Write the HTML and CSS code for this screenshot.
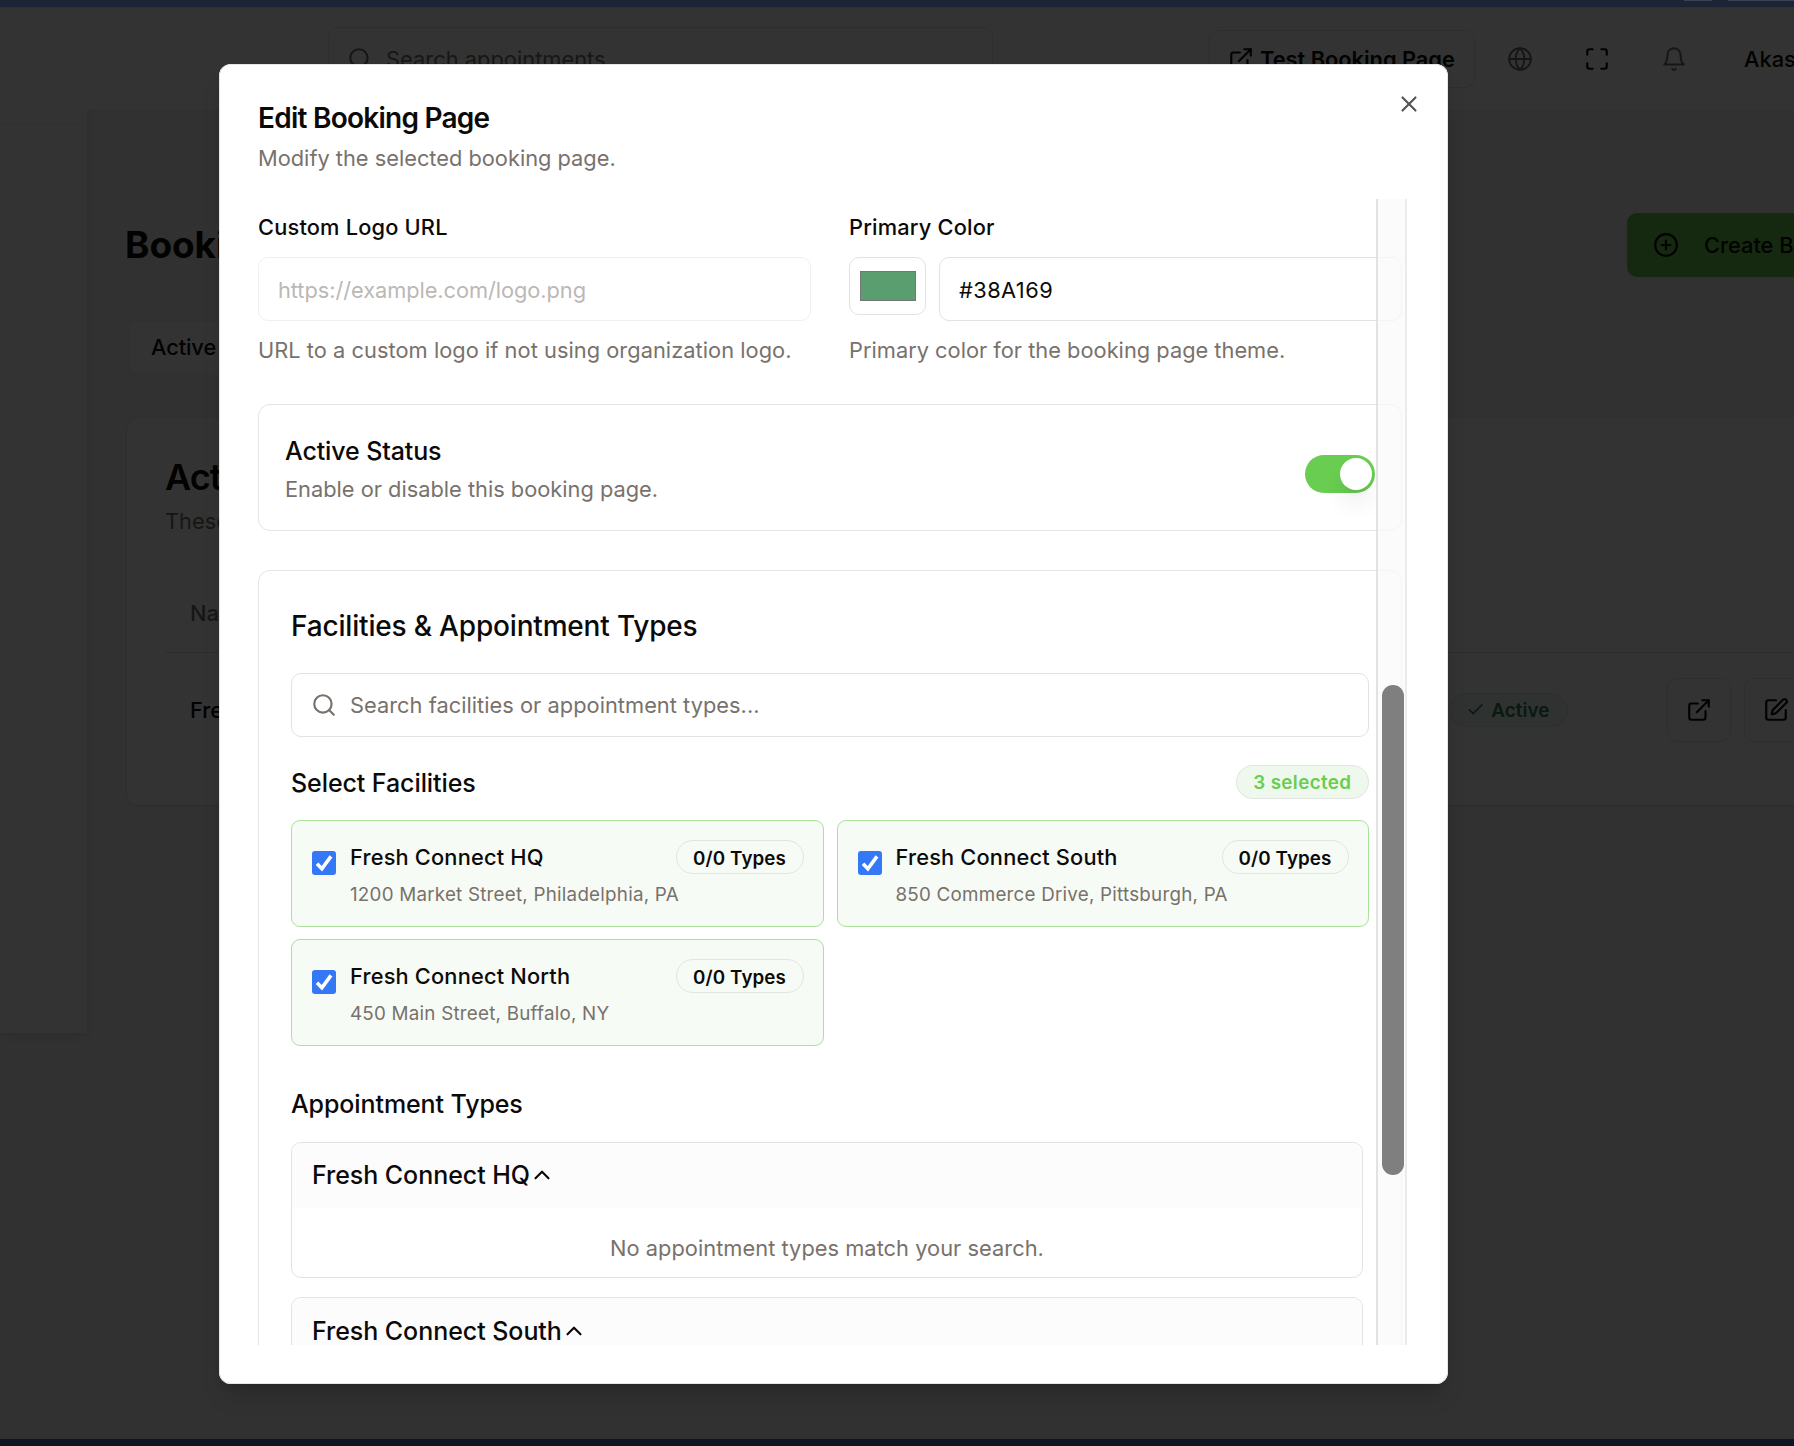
FILE: index.html
```html
<!DOCTYPE html>
<html lang="en">
<head>
<meta charset="utf-8">
<title>Booking Pages</title>
<link rel="stylesheet" href="styles.css">
</head>
<body>
<svg class="sprite" aria-hidden="true">
  <symbol id="i-search" viewBox="0 0 24 24"><circle cx="11" cy="11" r="8"/><path d="m21 21-4.3-4.3"/></symbol>
  <symbol id="i-link" viewBox="0 0 24 24"><path d="M15 3h6v6"/><path d="M10 14 21 3"/><path d="M18 13v6a2 2 0 0 1-2 2H5a2 2 0 0 1-2-2V8a2 2 0 0 1 2-2h6"/></symbol>
  <symbol id="i-globe" viewBox="0 0 24 24"><circle cx="12" cy="12" r="10"/><path d="M12 2a14.5 14.5 0 0 0 0 20 14.5 14.5 0 0 0 0-20"/><path d="M2 12h20"/></symbol>
  <symbol id="i-max" viewBox="0 0 24 24"><path d="M8 3H5a2 2 0 0 0-2 2v3"/><path d="M21 8V5a2 2 0 0 0-2-2h-3"/><path d="M3 16v3a2 2 0 0 0 2 2h3"/><path d="M16 21h3a2 2 0 0 0 2-2v-3"/></symbol>
  <symbol id="i-bell" viewBox="0 0 24 24"><path d="M6 8a6 6 0 0 1 12 0c0 7 3 9 3 9H3s3-2 3-9"/><path d="M10.3 21a1.94 1.94 0 0 0 3.4 0"/></symbol>
  <symbol id="i-plus" viewBox="0 0 24 24"><circle cx="12" cy="12" r="10"/><path d="M8 12h8"/><path d="M12 8v8"/></symbol>
  <symbol id="i-check" viewBox="0 0 24 24"><path d="M20 6 9 17l-5-5"/></symbol>
  <symbol id="i-edit" viewBox="0 0 24 24"><path d="M12 3H5a2 2 0 0 0-2 2v14a2 2 0 0 0 2 2h14a2 2 0 0 0 2-2v-7"/><path d="M18.375 2.625a1 1 0 0 1 3 3l-9.013 9.014a2 2 0 0 1-.853.505l-2.873.84a.5.5 0 0 1-.62-.62l.84-2.873a2 2 0 0 1 .506-.852z"/></symbol>
  <symbol id="i-x" viewBox="0 0 24 24"><path d="M18 6 6 18"/><path d="m6 6 12 12"/></symbol>
  <symbol id="i-up" viewBox="0 0 24 24"><path d="m18 15-6-6-6 6"/></symbol>
  <symbol id="i-tick" viewBox="0 0 24 24"><path d="M5 12.8 9.9 17.8 19 5.4"/></symbol>
</svg>

<div class="window-top"><span class="chip"></span><span class="chip wide"></span></div>

<div class="app">
  <aside class="sidebar"><div class="sidebar-head"></div></aside>
  <div class="content">
    <header class="topbar">
      <div class="top-search"><svg class="icon"><use href="#i-search"/></svg><span>Search appointments...</span></div>
      <button class="test-btn"><svg class="icon"><use href="#i-link"/></svg><span>Test Booking Page</span></button>
      <svg class="icon muted globe"><use href="#i-globe"/></svg>
      <svg class="icon max"><use href="#i-max"/></svg>
      <svg class="icon muted bell"><use href="#i-bell"/></svg>
      <span class="user">Akash</span>
    </header>
    <main class="main">
      <div class="title-row">
        <h1>Booking</h1>
        <button class="create-btn"><svg class="icon"><use href="#i-plus"/></svg><span>Create Booking Page</span></button>
      </div>
      <div class="tab">Active</div>
      <section class="card">
        <h2>Active</h2>
        <p class="card-sub">These</p>
        <div class="t-head">Name</div>
        <div class="t-row">
          <span class="t-name">Fresh</span>
          <span class="t-badge"><svg><use href="#i-check"/></svg>Active</span>
          <span class="t-btn first"><svg class="icon"><use href="#i-link"/></svg></span>
          <span class="t-btn"><svg class="icon"><use href="#i-edit"/></svg></span>
        </div>
      </section>
    </main>
  </div>

  <div class="overlay">
    <div class="modal" role="dialog">
      <svg class="icon close"><use href="#i-x"/></svg>
      <h3 class="m-title">Edit Booking Page</h3>
      <p class="m-desc">Modify the selected booking page.</p>

      <div class="scroll">
        <div class="form">
          <div class="cols">
            <div>
              <label class="label">Custom Logo URL</label>
              <input class="input disabled" placeholder="https://example.com/logo.png">
              <p class="help wide">URL to a custom logo if not using organization logo.</p>
            </div>
            <div>
              <label class="label">Primary Color</label>
              <div class="color-row">
                <div class="color-box"><div class="swatch"></div></div>
                <input class="input hex" value="#38A169">
              </div>
              <p class="help">Primary color for the booking page theme.</p>
            </div>
          </div>

          <div class="status">
            <div>
              <div class="status-title">Active Status</div>
              <div class="status-sub">Enable or disable this booking page.</div>
            </div>
            <div class="toggle"><div class="knob"></div></div>
          </div>

          <div class="facilities">
            <h4>Facilities &amp; Appointment Types</h4>
            <div class="f-search"><svg class="icon"><use href="#i-search"/></svg><span>Search facilities or appointment types...</span></div>
            <div class="select-row"><span class="sub-title">Select Facilities</span><span class="badge selected">3 selected</span></div>
            <div class="grid">
              <div class="fac">
                <span class="check"><svg><use href="#i-tick"/></svg></span>
                <div class="fac-text"><div class="fac-name">Fresh Connect HQ</div><div class="fac-addr">1200 Market Street, Philadelphia, PA</div></div>
                <span class="badge">0/0 Types</span>
              </div>
              <div class="fac">
                <span class="check"><svg><use href="#i-tick"/></svg></span>
                <div class="fac-text"><div class="fac-name">Fresh Connect South</div><div class="fac-addr">850 Commerce Drive, Pittsburgh, PA</div></div>
                <span class="badge">0/0 Types</span>
              </div>
              <div class="fac">
                <span class="check"><svg><use href="#i-tick"/></svg></span>
                <div class="fac-text"><div class="fac-name">Fresh Connect North</div><div class="fac-addr">450 Main Street, Buffalo, NY</div></div>
                <span class="badge">0/0 Types</span>
              </div>
            </div>
            <div class="sub-title types">Appointment Types</div>
            <div class="acc">
              <div class="acc-head">Fresh Connect HQ<svg class="icon"><use href="#i-up"/></svg></div>
              <p>No appointment types match your search.</p>
            </div>
            <div class="acc">
              <div class="acc-head">Fresh Connect South<svg class="icon"><use href="#i-up"/></svg></div>
            </div>
          </div>
        </div>
        <div class="track"><div class="thumb"></div></div>
      </div>
    </div>
  </div>
</div>
<div class="window-bottom"></div>
</body>
</html>
```
FILE: styles.css
```css
* { box-sizing: border-box; margin: 0; padding: 0; }
html, body { width: 100%; height: 100%; overflow: hidden; }
body {
  display: flex; flex-direction: column;
  font-family: Inter, "Liberation Sans", sans-serif;
  font-size: 21.8px; color: #0c0a09; background: #303030;
  -webkit-font-smoothing: antialiased;
}
button, input { font: inherit; color: inherit; background: none; }
.sprite { position: absolute; width: 0; height: 0; }
.icon { width: 26px; height: 26px; flex: none; }
svg { fill: none; stroke: currentColor; stroke-width: 2; stroke-linecap: round; stroke-linejoin: round; display: block; }

.window-top { flex: none; height: 8px; background: #1d2435; border-bottom: 1px solid #27304a; display: flex; gap: 16px; padding-left: 1684px; overflow: hidden; }
.window-top .chip { flex: none; width: 28px; height: 1px; background: #3a4058; }
.window-top .wide { width: 80px; }
.window-bottom { flex: none; height: 7px; background: #0f1424; }

/* page behind the dialog */
.app { position: relative; flex: 1; min-height: 0; display: flex; overflow: hidden; background: #f5f5f4; white-space: nowrap; }
.sidebar { flex: none; width: 87px; height: 1025px; background: #fff; box-shadow: 0 4px 12px rgba(0,0,0,.1); }
.sidebar-head { height: 116px; border-bottom: 1px solid #eeedec; }
.content { flex: none; width: 1900px; }
.topbar { height: 103px; background: #fff; border-bottom: 1px solid #e7e5e4; display: flex; align-items: center; padding-left: 241px; }
.muted { color: #78716c; stroke-width: 1.8; }
.top-search { width: 665px; height: 64px; border: 1px solid #e7e5e4; border-radius: 10px; display: flex; align-items: center; gap: 13px; padding-left: 18px; color: #78716c; letter-spacing: .04px; }
.test-btn { margin-left: 216px; width: 266px; height: 58px; border: 1px solid #e7e5e4; border-radius: 10px; display: flex; align-items: center; gap: 6px; padding-left: 18px; font-weight: 600; letter-spacing: -.02px; }
.globe { margin-left: 32px; }
.max, .bell { margin-left: 51px; }
.user { margin-left: 57px; font-weight: 500; }
.main { padding: 102px 0 0 39px; }
.title-row { display: flex; align-items: center; height: 64px; }
.title-row h1 { width: 1501px; font-size: 37px; font-weight: 700; letter-spacing: -.1px; line-height: 44px; margin-left: -1px; }
.create-btn { width: 340px; height: 64px; border: 0; border-radius: 10px; background: #69c850; display: flex; align-items: center; gap: 25px; padding-left: 26px; font-weight: 500; margin-left: 1px; }
.tab { margin: 45px 0 0 5px; width: 110px; height: 51px; border-radius: 7px; background: #fff; padding-left: 20px; line-height: 51px; font-weight: 500; letter-spacing: -.1px; }
.card { margin-top: 44px; height: 389px; background: #fff; border: 1px solid #e7e5e4; border-radius: 13px; padding: 38px 0 0 38px; box-shadow: 0 2px 4px rgba(0,0,0,.06); }
.card h2 { font-size: 36px; font-weight: 600; letter-spacing: -.9px; line-height: 42px; }
.card-sub { margin-top: 8px; line-height: 30px; color: #78716c; }
.t-head { margin-top: 38px; height: 79px; line-height: 79px; border-bottom: 1px solid #dcdad8; padding-left: 25px; color: #78716c; font-weight: 500; }
.t-row { height: 114px; padding-left: 25px; display: flex; align-items: center; font-weight: 500; }
.t-name { width: 1259px; }
.t-badge { width: 119px; height: 34px; border-radius: 17px; border: 1px solid #dce9e0; background: #f0f7f2; color: #2f8050; font-size: 18.8px; font-weight: 600; letter-spacing: .1px; display: flex; align-items: center; gap: 6px; padding-left: 16px; }
.t-badge svg { width: 19.2px; height: 19.2px; }
.t-btn { width: 64px; height: 64px; border: 1px solid #e7e5e4; border-radius: 10px; display: flex; align-items: center; justify-content: center; margin-left: 13px; }
.t-btn.first { margin-left: 99px; }

.overlay { position: absolute; inset: 0; background: rgba(0,0,0,.8); padding: 56px 0 0 219px; }
.modal { position: relative; width: 1229px; height: 1320px; background: #fff; border-radius: 12px; padding: 39px; box-shadow: inset 0 0 0 1px #e7e5e4, 0 16px 24px -6px rgba(0,0,0,.16), 0 6px 10px -6px rgba(0,0,0,.16); }
.close { position: absolute; top: 26.5px; right: 26.5px; color: #555; }
.m-title { font-size: 28px; font-weight: 600; letter-spacing: -.75px; line-height: 30px; }
.m-desc { margin-top: 9px; line-height: 32px; color: #78716c; }
.scroll { position: relative; margin-top: 25px; width: 1149px; height: 1146px; overflow: hidden; }
.form { width: 1144px; padding-top: 17px; }
.cols { display: grid; grid-template-columns: 1fr 1fr; column-gap: 38px; }
.label { display: block; line-height: 22px; font-weight: 500; letter-spacing: .18px; margin-bottom: 19px; }
.input { display: block; width: 100%; height: 64px; border: 1px solid #e2e2e2; border-radius: 10px; padding: 2px 19px 0; outline: 0; }
.input.disabled { border-color: #f0f0f0; letter-spacing: -.06px; }
.input::placeholder { color: #bbb8b5; opacity: 1; }
.color-row { display: flex; gap: 13px; height: 64px; }
.color-box { flex: none; width: 77px; height: 58px; border: 1px solid #e2e2e2; border-radius: 10px; padding: 13px 10px 0; }
.swatch { width: 56px; height: 30px; background: #5a9e70; border: 1px solid #767676; }
.hex { letter-spacing: .45px; }
.help { margin-top: 13px; line-height: 32px; color: #78716c; letter-spacing: .01px; }
.help.wide { letter-spacing: .04px; }
.status { margin-top: 38px; height: 127px; border: 1px solid #e4e4e4; border-radius: 12px; padding: 31px 26px 0; display: flex; justify-content: space-between; }
.status-title { font-size: 25px; font-weight: 500; letter-spacing: -.12px; line-height: 30px; }
.status-sub { margin-top: 7px; line-height: 32px; color: #78716c; }
.toggle { margin-top: 19px; width: 70px; height: 38px; border-radius: 19px; background: #68cd50; padding: 3px; }
.knob { margin-left: auto; width: 32px; height: 32px; border-radius: 50%; background: #fff; box-shadow: 0 16px 24px -4px rgba(0,0,0,.1), 0 6px 10px -6px rgba(0,0,0,.1); }

.facilities { margin-top: 39px; border: 1px solid #e4e4e4; border-radius: 12px; padding: 37px 32px 40px; }
.facilities h4 { font-size: 28px; font-weight: 500; letter-spacing: -.18px; line-height: 36px; }
.f-search { margin-top: 29px; height: 64px; border: 1px solid #e2e2e2; border-radius: 10px; display: flex; align-items: center; gap: 13px; padding-left: 19px; color: #78716c; letter-spacing: .03px; }
.select-row { margin-top: 28px; height: 34px; display: flex; align-items: center; justify-content: space-between; }
.sub-title { font-size: 25px; font-weight: 500; letter-spacing: -.08px; line-height: 30px; padding-top: 2px; }
.badge { flex: none; height: 34px; line-height: 34px; border: 1px solid #e4e4e2; border-radius: 17px; padding: 0 16.5px 0 16px; font-size: 18.8px; font-weight: 600; letter-spacing: .1px; }
.badge.selected { color: #68cd50; background: #eff8ed; letter-spacing: .4px; }
.grid { margin-top: 21px; display: grid; grid-template-columns: repeat(2, minmax(0, 1fr)); gap: 12px 13px; }
.fac { height: 107px; border: 1px solid #a9e29b; border-radius: 9px; background: #f7fbf6; padding: 19px 19px 0 20px; display: flex; align-items: flex-start; }
.fac .badge { line-height: 35px; }
.check { width: 24px; height: 24px; margin-top: 11px; border-radius: 3px; background: #3478f6; color: #fff; flex: none; }
.check svg { width: 24px; height: 24px; stroke-width: 3.6; stroke-linecap: butt; stroke-linejoin: miter; }
.fac-text { flex: 1; min-width: 0; margin-left: 14px; }
.fac-name { margin-top: 1px; line-height: 32px; font-weight: 500; letter-spacing: .18px; }
.fac-addr { margin-top: 9px; line-height: 26px; font-size: 18.8px; color: #78716c; letter-spacing: .23px; }
.types { margin-top: 41px; letter-spacing: -.1px; }
.acc { margin-top: 23px; width: 1072px; height: 136px; border: 1px solid #e2e2e2; border-radius: 10px; overflow: hidden; }
.acc + .acc { margin-top: 19px; }
.acc-head { height: 65px; background: #fcfcfc; display: flex; align-items: center; padding: 0 0 1px 20px; font-size: 25px; font-weight: 500; letter-spacing: -.05px; }
.acc-head .icon { margin-left: -1px; }
.acc + .acc .acc-head { height: 66px; }
.acc p { padding-top: 24px; line-height: 32px; text-align: center; color: #78716c; letter-spacing: .04px; }

.track { position: absolute; top: 0; right: 0; width: 31px; height: 100%; background: rgba(249,249,249,.75); border-left: 2px solid #e2e2e2; border-right: 2px solid #ebebeb; }
.thumb { position: absolute; top: 486px; left: 4px; width: 22px; height: 490px; border-radius: 11px; background: #7f7f7f; }
```
